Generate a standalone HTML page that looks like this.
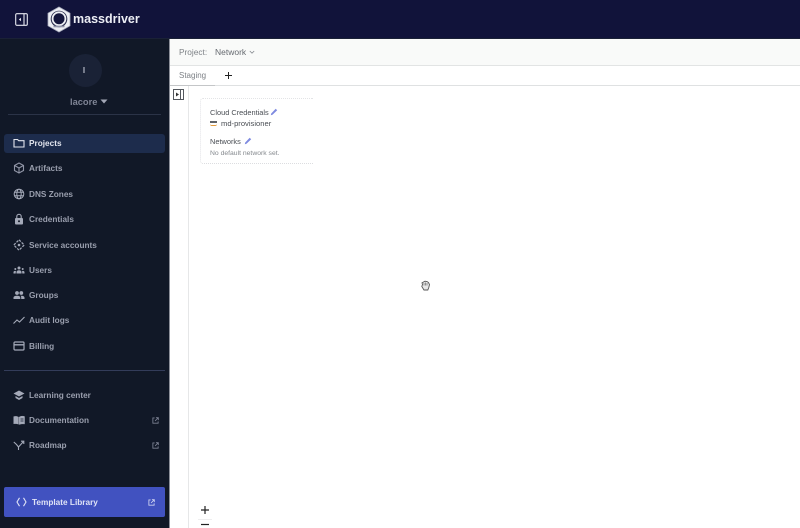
<!DOCTYPE html>
<html lang="en">
<head>
<meta charset="utf-8">
<title>Massdriver</title>
<style>
*{box-sizing:border-box}
html,body{margin:0;padding:0;width:800px;height:528px;overflow:hidden;background:#fff;font-family:"Liberation Sans",sans-serif}
.abs{position:absolute}
#top{left:0;top:0;width:800px;height:39px;background:#11133a;border-bottom:1px solid #1a2136}
#side{left:0;top:39px;width:170px;height:489px;background:#111827}
.nav{position:absolute;left:29px;font-size:8.250px;font-weight:bold;color:#9a9fae;line-height:12px;white-space:nowrap;filter:blur(.25px)}
.ic{position:absolute;left:13px;width:12px;height:12px;overflow:visible;filter:blur(.2px)}
.txt{position:absolute;white-space:nowrap;line-height:12px;filter:blur(.25px)}
</style>
</head>
<body>
<div class="abs" id="top"></div>
<svg class="abs" style="left:15px;top:13px" width="13" height="13" viewBox="0 0 13 13"><rect x=".7" y=".7" width="11.600" height="11.600" rx="1.200" fill="none" stroke="#e6e8f0" stroke-width="1.100"/><path d="M9 .7v11.600" stroke="#e6e8f0" stroke-width="1.100"/><path d="M6 4.700v3.600L3.800 6.500z" fill="#e6e8f0"/></svg>
<svg class="abs" style="left:46px;top:6px" width="26" height="27" viewBox="0 0 26 27"><path d="M13 1 24 7.200V19.800L13 26 2 19.800V7.200Z" fill="#eceef3" stroke="#a9adbd" stroke-width=".8"/><circle cx="13" cy="13" r="8.300" fill="#2a2d4d"/><circle cx="13" cy="12.700" r="6.400" fill="#14163c" stroke="#eceef3" stroke-width="1.800"/><path d="M7.500 20.500h11" stroke="#8f93a8" stroke-width="1.600"/></svg>
<div class="txt" style="left:73px;top:10px;font-size:12.500px;line-height:19px;font-weight:bold;color:#eceef4">massdriver</div>

<div class="abs" id="side"></div>
<div class="abs" style="left:69px;top:54px;width:33px;height:33px;border-radius:50%;background:#1a2236"></div>
<div class="txt" style="left:82px;top:65px;font-size:8px;font-weight:bold;color:#b5b9c6;width:4px;text-align:center">I</div>
<div class="txt" style="left:70px;top:96px;font-size:9.300px;font-weight:bold;color:#7f8495">lacore</div>
<svg class="abs" style="left:100px;top:99px" width="8" height="5"><path d="M0.500 0.500H7.500L4 4.500Z" fill="#a3a7b6"/></svg>
<div class="abs" style="left:8px;top:114px;width:153px;height:1px;background:#2b3347"></div>

<div class="abs" style="left:4px;top:134px;width:161px;height:19px;border-radius:3px;background:#1d2c4c"></div>
<svg class="ic" style="top:137px" viewBox="0 0 12 12" fill="none" stroke="#e4e6ee" stroke-width="1.100"><path d="M1 2.500H4.500L5.700 3.700H11V10H1Z"/></svg>
<div class="nav" style="top:138px;color:#e2e5ee">Projects</div>

<svg class="ic" style="top:162px" viewBox="0 0 12 12" fill="none" stroke="#8f94a5" stroke-width="1.100"><path d="M6 1 10.500 3.500V8.500L6 11 1.500 8.500V3.500ZM1.500 3.500 6 6 10.500 3.500M6 6V11"/></svg>
<div class="nav" style="top:163px">Artifacts</div>

<svg class="ic" style="top:188px" viewBox="0 0 12 12" fill="none" stroke="#a4a9b8" stroke-width="1"><circle cx="6" cy="6" r="4.800"/><ellipse cx="6" cy="6" rx="2.200" ry="4.800"/><path d="M1.200 4.300h9.600M1.200 7.700h9.600"/></svg>
<div class="nav" style="top:189px">DNS Zones</div>

<svg class="ic" style="top:213px" viewBox="0 0 12 12"><rect x="2" y="5" width="8" height="6.500" rx="1" fill="#a4a9b8"/><path d="M3.800 5V3.500a2.200 2.200 0 0 1 4.400 0V5" fill="none" stroke="#a4a9b8" stroke-width="1.100"/><circle cx="6" cy="8.200" r="1" fill="#111827"/></svg>
<div class="nav" style="top:214px">Credentials</div>

<svg class="ic" style="top:239px" viewBox="0 0 12 12" fill="none" stroke="#a4a9b8" stroke-width="1.200"><path d="M6 .8 11.200 6 6 11.200 .8 6Z" stroke-dasharray="2.500 1.200"/><circle cx="6" cy="6" r="1.300" fill="#a4a9b8" stroke="none"/></svg>
<div class="nav" style="top:240px">Service accounts</div>

<svg class="ic" style="top:264px" viewBox="0 0 12 12" fill="#a4a9b8"><circle cx="6" cy="4" r="1.500"/><circle cx="2.300" cy="5" r="1"/><circle cx="9.700" cy="5" r="1"/><path d="M3.500 9.500V8c0-1 1-1.800 2.500-1.800S8.500 7 8.500 8v1.500ZM.5 9.500V8.300c0-.8.600-1.400 1.700-1.400l.7.100-.2 2.500ZM11.500 9.500V8.300c0-.8-.6-1.400-1.700-1.400l-.7.100.2 2.500Z"/></svg>
<div class="nav" style="top:265px">Users</div>

<svg class="ic" style="top:289px" viewBox="0 0 12 12" fill="#a4a9b8"><circle cx="4" cy="4" r="1.900"/><circle cx="8.300" cy="4" r="1.900"/><path d="M.5 10V8.600C.5 7.400 2 6.700 4 6.700s3.300.7 3.300 1.900V10ZM8.200 10V8.400c0-.6-.2-1.200-.7-1.600l.9-.1c1.700 0 3.100.7 3.100 1.900V10Z"/></svg>
<div class="nav" style="top:290px">Groups</div>

<svg class="ic" style="top:314px" viewBox="0 0 12 12" fill="none" stroke="#a4a9b8" stroke-width="1.100"><path d="M.5 9.500 4 6 6.500 8 11.500 3"/></svg>
<div class="nav" style="top:315px">Audit logs</div>

<svg class="ic" style="top:340px" viewBox="0 0 12 12" fill="none" stroke="#a4a9b8" stroke-width="1.200"><rect x="1" y="2" width="10" height="8" rx="1"/><path d="M1 4.800h10" stroke-width="1.400"/></svg>
<div class="nav" style="top:341px">Billing</div>

<div class="abs" style="left:4px;top:370px;width:161px;height:1px;background:#333c5a"></div>

<svg class="ic" style="top:389px" viewBox="0 0 12 12" fill="#a4a9b8"><path d="M6 1.500 11.500 4.500 6 7.500 .5 4.500ZM2.500 7 6 9 9.500 7V9L6 11 2.500 9Z"/></svg>
<div class="nav" style="top:390px">Learning center</div>

<svg class="ic" style="top:414px" viewBox="0 0 12 12"><path d="M.5 2.500C2 2 4 2 5.700 3V10.500C4 9.700 2 9.700.5 10Z" fill="#a4a9b8"/><path d="M6.300 3C8 2 10 2 11.500 2.500V10C10 9.700 8 9.700 6.300 10.500Z" fill="#a4a9b8" stroke="#a4a9b8" stroke-width=".5"/><path d="M7.500 5h3M7.500 7h3" stroke="#111827" stroke-width=".7"/></svg>
<div class="nav" style="top:415px">Documentation</div>
<svg class="abs" style="left:152px;top:417px" width="7" height="7" viewBox="0 0 8 8" fill="none" stroke="#7c8193"><path d="M3 1H1V7H7V5M4.500 .8H7.200V3.500M7 1 3.500 4.500"/></svg>

<svg class="ic" style="top:439px" viewBox="0 0 12 12" fill="none" stroke="#a4a9b8" stroke-width="1.100"><path d="M.8 3 3.500 5.500 5.500 8V11M10.500 2.500 5.500 8M8 2.200H10.800V5"/></svg>
<div class="nav" style="top:440px">Roadmap</div>
<svg class="abs" style="left:152px;top:442px" width="7" height="7" viewBox="0 0 8 8" fill="none" stroke="#7c8193"><path d="M3 1H1V7H7V5M4.500 .8H7.200V3.500M7 1 3.500 4.500"/></svg>

<div class="abs" style="left:4px;top:487px;width:161px;height:30px;border-radius:2px;background:#4152c0"></div>
<svg class="abs" style="left:16px;top:497px" width="11" height="10" viewBox="0 0 11 10" fill="none" stroke="#dfe3f6" stroke-width="1.100"><path d="M3.500 .8 1 5 3.500 9.200M7.500 .8 10 5 7.500 9.200"/></svg>
<div class="nav" style="left:32px;top:497px;color:#dfe3f6">Template Library</div>
<svg class="abs" style="left:148px;top:499px" width="7" height="7" viewBox="0 0 8 8" fill="none" stroke="#cdd2f0"><path d="M3 1H1V7H7V5M4.500 .8H7.200V3.500M7 1 3.500 4.500"/></svg>

<div class="abs" style="left:169px;top:39px;width:1px;height:489px;background:#8c8f99"></div>
<div class="abs" style="left:170px;top:39px;width:630px;height:27px;background:#f9faf9;border-bottom:1px solid #e2e4e4"></div>
<div class="txt" style="left:179px;top:46px;font-size:8.300px;color:#7d8186">Project:</div>
<div class="txt" style="left:215px;top:46px;font-size:8.500px;color:#666a70">Network</div>
<svg class="abs" style="left:249px;top:50px" width="6" height="5" fill="none" stroke="#85898f" stroke-width=".8"><path d="M.8 1 3 3.200 5.200 1"/></svg>
<div class="txt" style="left:179px;top:70px;font-size:8px;color:#7d8186">Staging</div>
<div class="abs" style="left:170px;top:85px;width:630px;height:1px;background:#dfe1e2"></div>
<div class="abs" style="left:170px;top:85px;width:45px;height:1px;background:#c4c6c8"></div>
<svg class="abs" style="left:225px;top:72px" width="7" height="7" stroke="#222"><path d="M3.500 0V7M0 3.500H7"/></svg>

<svg class="abs" style="left:173px;top:89px" width="11" height="11" viewBox="0 0 11 11" fill="none" stroke="#54585e"><rect x=".5" y=".5" width="10" height="10"/><path d="M7.500 .5v10" /><path d="M3 3.500V7.500L6 5.500Z" fill="#333" stroke="none"/></svg>
<div class="abs" style="left:188px;top:86px;width:1px;height:442px;background:#e6e7e8"></div>

<div class="abs" style="left:200px;top:98px;width:113px;height:66px;border-left:1px dotted #e3e4e6;border-top:1px dotted #e3e4e6;border-bottom:1px dotted #dcdde0;border-radius:3px 0 0 3px"></div>
<div class="txt" style="left:210px;top:107px;font-size:7.400px;color:#4a4e54">Cloud Credentials</div>
<svg class="abs" style="left:270px;top:108px" width="8" height="8" viewBox="0 0 8 8"><path d="M.8 7.200 1.200 5.500 5.700.8 7.200 2.300 2.500 6.800Z" fill="#7e8ae0"/></svg>
<div class="abs" style="left:210px;top:121px;width:7px;height:2px;background:#5f6368"></div>
<div class="abs" style="left:210px;top:124px;width:7px;height:2px;border-bottom:1px solid #e29a3c;border-radius:0 0 4px 4px"></div>
<div class="txt" style="left:221px;top:118px;font-size:7.600px;color:#4a4e54">md-provisioner</div>
<div class="txt" style="left:210px;top:136px;font-size:7.400px;color:#4a4e54">Networks</div>
<svg class="abs" style="left:244px;top:137px" width="8" height="8" viewBox="0 0 8 8"><path d="M.8 7.200 1.200 5.500 5.700.8 7.200 2.300 2.500 6.800Z" fill="#7e8ae0"/></svg>
<div class="txt" style="left:210px;top:148px;font-size:6.800px;color:#85898e">No default network set.</div>

<svg class="abs" style="left:420px;top:280px" width="11" height="11" viewBox="0 0 11 11"><path d="M2.500 4.500 2 2.800 3.500 2 5 1.200 7 1.500 8.500 2.500 9.500 4.500 8.800 7.500 7.800 10H4L1.800 6.500Z" fill="#e8e8e8" stroke="#555" stroke-width=".9"/><path d="M4 3v2.500M5.500 2.500v3M7 3v2.500" stroke="#555" stroke-width=".6"/></svg>

<svg class="abs" style="left:201px;top:506px" width="8" height="8" stroke="#222" stroke-width="1.200"><path d="M4 0V8M0 4H8"/></svg>
<svg class="abs" style="left:201px;top:523px" width="8" height="3" stroke="#222" stroke-width="1.200"><path d="M0 1.500H8"/></svg>
<div class="abs" style="left:198px;top:519px;width:14px;height:1px;background:#eeeeef"></div>
</body>
</html>
